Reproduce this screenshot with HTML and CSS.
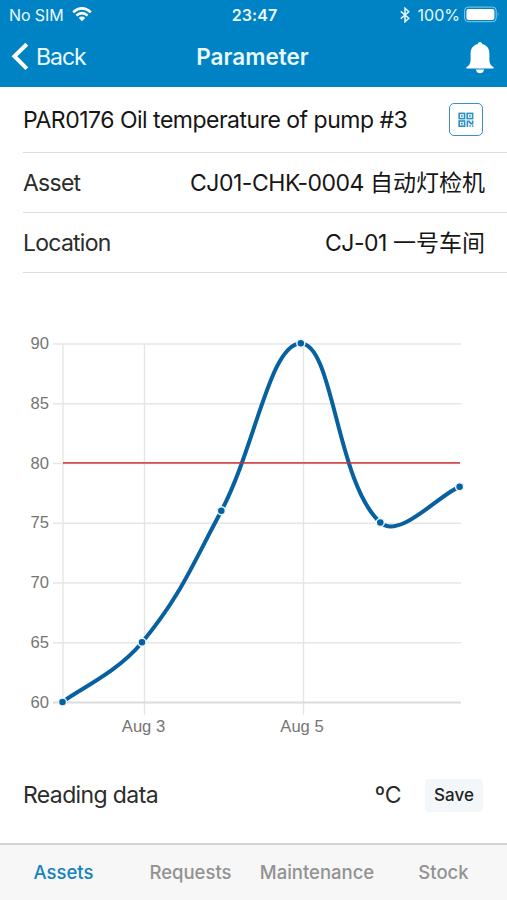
FILE: index.html
```html
<!DOCTYPE html>
<html lang="en">
<head>
    <meta charset="UTF-8">
    <meta name="viewport" content="width=device-width, initial-scale=1.0">
    <title>Parameter</title>
    <link rel="stylesheet" href="styles.css">
</head>
<body>
    <div class="app">
        <header class="header">
            <!-- Status bar -->
            <div class="status-bar">
                <div class="status-bar__left">
                    <span class="status-bar__carrier">No SIM</span>
                    <svg class="status-bar__wifi" width="20" height="15" viewBox="0 0 20 15">
                        <path d="M1.2 5.2 Q10 -2.4 18.8 5.2" />
                        <path d="M4.4 8.5 Q10 3.8 15.6 8.5" />
                        <path class="status-bar__wifi-dot" d="M10 14.2 L6.8 10.9 Q10 8.3 13.2 10.9 Z" />
                    </svg>
                </div>
                <span class="status-bar__time">23:47</span>
                <div class="status-bar__right">
                    <svg class="status-bar__bluetooth" width="10" height="16" viewBox="0 0 10 16">
                        <path d="M0.8 4.4 L8.8 11.2 L5 14.8 V1.2 L8.8 4.8 L0.8 11.6" />
                    </svg>
                    <span class="status-bar__percent">100%</span>
                    <svg width="36" height="17" viewBox="0 0 36 17">
                        <rect x="0.6" y="1.1" width="31.6" height="14.6" rx="3.6" fill="none" stroke="#8cc9ec" stroke-width="1" />
                        <rect x="2.4" y="2.9" width="28" height="11" rx="1.8" fill="#fff" />
                        <path d="M33.8 6 Q35.6 8.4 33.8 10.8 Z" fill="#8cc9ec" />
                    </svg>
                </div>
            </div>

            <!-- Navigation bar -->
            <div class="nav">
                <div class="nav__back">
                    <svg width="18" height="30" viewBox="0 0 18 30">
                        <path d="M15.8 2.2 L3.4 14.2 L15.8 26.6" fill="none" stroke="#fff" stroke-width="4" />
                    </svg>
                    <span>Back</span>
                </div>
                <h1 class="nav__title">Parameter</h1>
                <svg class="nav__bell" width="28" height="33" viewBox="0 0 28 33">
                    <path d="M14 1 C15.2 1 16 1.8 16.2 2.9 C20.8 3.9 23.4 7.5 23.4 12.4 V18.4 C23.4 22.7 25 24.3 27.6 26.2 V27.4 H0.4 V26.2 C3 24.3 4.6 22.7 4.6 18.4 V12.4 C4.6 7.5 7.2 3.9 11.8 2.9 C12 1.8 12.8 1 14 1 Z" />
                    <path d="M10 28.4 H18 C17.9 30.8 16.2 32.2 14 32.2 C11.8 32.2 10.1 30.8 10 28.4 Z" />
                </svg>
            </div>
        </header>

        <main class="content">
            <div class="row row--title">
                <span class="row__name">PAR0176 Oil temperature of pump #3</span>
                <button class="qr-button" aria-label="QR">
                    <svg width="16" height="16" viewBox="0 0 16 16" fill="none" stroke="#2b8fc4" stroke-width="1.6">
                        <rect x="1.2" y="1.4" width="5.4" height="5.2" />
                        <rect x="9.2" y="1.4" width="5.4" height="5.2" />
                        <rect x="1.2" y="9" width="5.4" height="5.2" />
                        <path d="M3 4 H4.8 M11 4 H12.8 M3 11.6 H4.8" />
                        <path d="M9.4 15 V9.2 H11 L12.8 11.6 H14.6 V8.4 M11.4 14 H12.8 M13.8 14 H15.4" />
                    </svg>
                </button>
            </div>
            <div class="row">
                <span class="row__label">Asset</span>
                <span class="row__value">CJ01-CHK-0004 <span class="row__cjk">自动灯检机</span></span>
            </div>
            <div class="row">
                <span class="row__label">Location</span>
                <span class="row__value">CJ-01 <span class="row__cjk">一号车间</span></span>
            </div>

            <!-- Readings chart -->
            <svg class="chart" width="507" height="487" viewBox="0 273 507 487">
                <g class="chart__grid">
                    <path d="M53 344 H461 M53 403.8 H461 M53 463.5 H461 M53 523.2 H461 M53 583 H461 M53 642.8 H461" />
                    <path d="M63 344 V703 M144.5 344 V715 M303.5 344 V715" />
                    <path class="chart__axis" d="M53 702.5 H461" />
                </g>
                <g class="chart__labels chart__labels--y">
                    <text x="49" y="349">90</text>
                    <text x="49" y="409">85</text>
                    <text x="49" y="469">80</text>
                    <text x="49" y="528">75</text>
                    <text x="49" y="588">70</text>
                    <text x="49" y="648">65</text>
                    <text x="49" y="707.5">60</text>
                </g>
                <g class="chart__labels chart__labels--x">
                    <text x="143.5" y="732">Aug 3</text>
                    <text x="302" y="732">Aug 5</text>
                </g>
                <path class="chart__line" d="M62.5 702 C78 690 117.1 672.5 142 642.5 C180.5 596.1 192.2 565.1 221.3 511 C255.8 445.5 270 343.5 300.8 343.5 C333.6 343.5 336.1 482.8 380.3 522.5 C399.5 540.2 441 493 459.5 487" />
                <g class="chart__points">
                    <circle cx="62.5" cy="702" r="4" />
                    <circle cx="142" cy="642.3" r="4" />
                    <circle cx="221.3" cy="510.7" r="4" />
                    <circle cx="300.8" cy="343.3" r="4" />
                    <circle cx="380.3" cy="522.5" r="4" />
                    <circle cx="459.6" cy="486.8" r="4" />
                </g>
                <path class="chart__limit" d="M63 462.8 H460" />
            </svg>

            <div class="reading">
                <span class="reading__label">Reading data</span>
                <span class="reading__unit">ºC</span>
                <button class="reading__save">Save</button>
            </div>
        </main>

        <!-- Tabs -->
        <nav class="tabs">
            <a class="tabs__item tabs__item--active">Assets</a>
            <a class="tabs__item">Requests</a>
            <a class="tabs__item">Maintenance</a>
            <a class="tabs__item">Stock</a>
        </nav>
    </div>
</body>
</html>
```
FILE: styles.css
```css
* {
    box-sizing: border-box;
}

body {
    margin: 0;
    background: #fff;
    font-family: Inter, "Noto Sans CJK SC", sans-serif;
    font-size: 23px;
    letter-spacing: -0.47px;
    color: #161616;
}

.app {
    display: flex;
    flex-direction: column;
    width: 507px;
    height: 900px;
    overflow: hidden;
}

.header {
    height: 87px;
    background: #0083c5;
    color: #e9f9ff;
}

.status-bar {
    display: grid;
    grid-template-columns: 1fr auto 1fr;
    align-items: center;
    height: 29px;
    padding: 0 7px 0 9px;
    font-size: 16px;
    line-height: 20px;
    letter-spacing: 0;
}

.status-bar__left,
.status-bar__right {
    display: flex;
    align-items: center;
}

.status-bar__left {
    gap: 8px;
}

.status-bar__carrier {
    letter-spacing: -0.1px;
}

.status-bar__right {
    justify-content: flex-end;
}

.status-bar__wifi {
    fill: none;
    stroke: #fff;
    stroke-width: 2.5;
}

.status-bar__wifi .status-bar__wifi-dot {
    fill: #fff;
    stroke: none;
}

.status-bar__time {
    font-weight: 600;
    letter-spacing: 0.1px;
}

.status-bar__bluetooth {
    margin-right: 8px;
    fill: none;
    stroke: #e9f9ff;
    stroke-width: 1.5;
}

.status-bar__percent {
    margin-right: 4px;
}

.nav {
    display: grid;
    grid-template-columns: 1fr auto 1fr;
    align-items: center;
    height: 56px;
    padding: 0 13px 0 11px;
}

.nav__back {
    display: flex;
    align-items: center;
    gap: 7px;
    letter-spacing: -1px;
}

.nav__title {
    margin: 0;
    padding-bottom: 2px;
    font-size: 22.5px;
    font-weight: 600;
    letter-spacing: 0;
}

.nav__bell {
    justify-self: end;
    fill: #fff;
}

.content {
    flex: 1;
}

.row {
    display: flex;
    align-items: center;
    justify-content: space-between;
    height: 60px;
    margin-left: 23px;
    padding: 1px 22px 0 0;
    border-bottom: 1.5px solid #dedede;
    line-height: 30px;
    white-space: nowrap;
}

.row--title {
    height: 66px;
    padding: 0 24px 0 0;
}

.row__name {
    letter-spacing: -0.5px;
}

.row__label {
    color: #2c2c2c;
    letter-spacing: -0.75px;
}

.row__cjk {
    letter-spacing: 0;
}

.qr-button {
    display: flex;
    align-items: center;
    justify-content: center;
    width: 34px;
    height: 33px;
    padding: 0;
    border: 1.5px solid #3d8fbd;
    border-radius: 5px;
    background: #fff;
}

.chart {
    display: block;
    letter-spacing: 0;
}

.chart__grid {
    fill: none;
    stroke: #e6e6e6;
    stroke-width: 1.4;
}

.chart__grid .chart__axis {
    stroke: #dcdcdc;
    stroke-width: 2;
}

.chart__labels {
    font-family: "Liberation Sans", Arial, sans-serif;
    font-size: 16.6px;
    fill: #757575;
}

.chart__labels--y {
    text-anchor: end;
}

.chart__labels--x {
    text-anchor: middle;
}

.chart__line {
    fill: none;
    stroke: #07609f;
    stroke-width: 4;
}

.chart__points {
    fill: #07609f;
    stroke: #e6f6ff;
    stroke-width: 1.5;
}

.chart__limit {
    stroke: #ca3038;
    stroke-opacity: 0.85;
    stroke-width: 1.8;
}

.reading {
    display: flex;
    align-items: center;
    height: 70px;
    padding: 0 24px 0 23px;
    color: #2c2c2c;
}

.reading__label {
    flex: 1;
    letter-spacing: -0.62px;
}

.reading__unit {
    margin-right: 24px;
}

.reading__save {
    width: 58px;
    height: 33px;
    padding: 0;
    border: 0;
    border-radius: 4px;
    background: #f4f7fa;
    color: #222;
    font-family: inherit;
    font-size: 17px;
    font-weight: 500;
    letter-spacing: 0;
}

.tabs {
    display: grid;
    grid-template-columns: 127px 127px 126px 127px;
    align-items: center;
    height: 57px;
    padding-bottom: 2px;
    border-top: 2px solid #d4d4d4;
    background: #f7f7f7;
    color: #929292;
    font-size: 18.5px;
    font-weight: 500;
    letter-spacing: 0;
    text-align: center;
}

.tabs__item--active {
    color: #1683b9;
}
```
